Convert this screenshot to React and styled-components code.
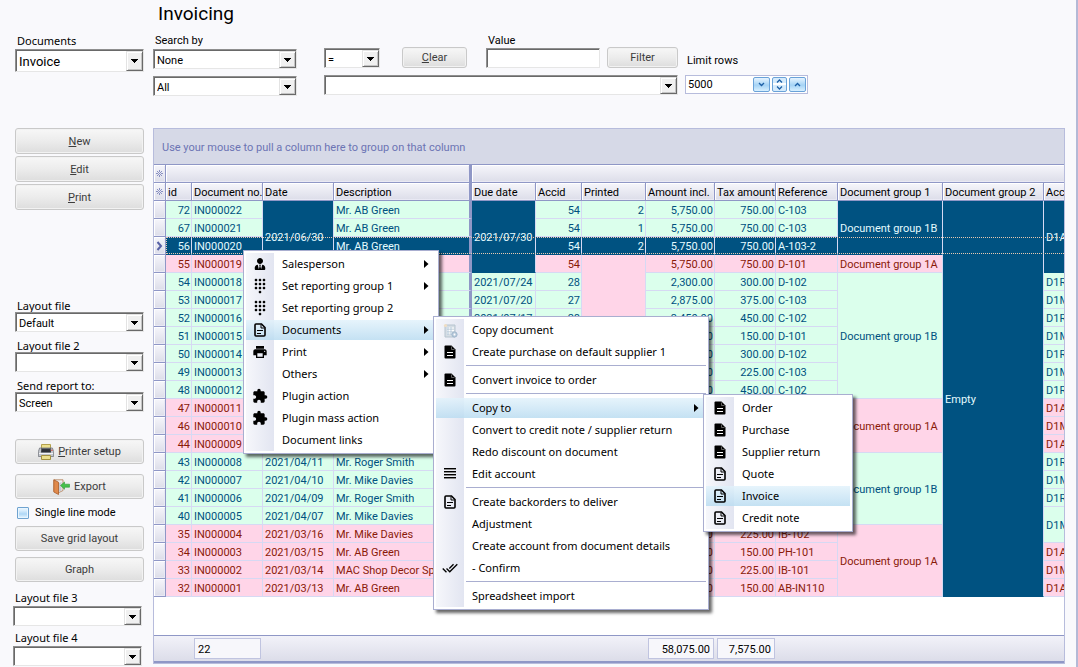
import React from "react";
import styled, { createGlobalStyle, css } from "styled-components";
import { MdDialpad, MdPrint, MdDoneAll, MdExtension } from "react-icons/md";
import { FaUserTie } from "react-icons/fa";

const GlobalStyle = createGlobalStyle`
  *, *::before, *::after { box-sizing: border-box; }
  body {
    margin: 0;
    background: #f9f9fc;
    color: #000;
    font-family: Roboto, "Liberation Sans", sans-serif;
    font-size: 11px;
  }
  button, input, select { font: inherit; color: inherit; margin: 0; }
`;

/* ---------- page frame ---------- */

const Page = styled.div`
  position: relative;
  display: flex;
  min-height: 100vh;
  overflow: hidden;
  border-right: 2px solid #b4b9d6;
`;

const Sidebar = styled.aside`
  flex: none;
  width: 153px;
  padding-top: 35px;
`;

const Section = styled.section`
  display: flex;
  flex-direction: column;
  width: 129px;
  gap: ${(p) => p.$gap || 0}px;
  margin-top: ${(p) => p.$top || 0}px;
  margin-left: ${(p) => p.$inset || 15}px;
`;

const Main = styled.main`
  flex: 1;
  min-width: 0;
  display: flex;
  flex-direction: column;
  padding: 4px 11px 3px 0;
`;

const Title = styled.h1`
  margin: 0 0 10px;
  padding-left: 5px;
  font-size: 19px;
  line-height: 20px;
  font-weight: 400;
`;

/* ---------- form controls ---------- */

const Field = styled.div`
  display: flex;
  flex-direction: column;
  gap: ${(p) => p.$gap || 0}px;
  width: ${(p) => (p.$width ? p.$width + "px" : "auto")};
`;

const Label = styled.label`
  height: 12px;
  padding-left: 2px;
  line-height: 14px;
  white-space: nowrap;
  ${(p) =>
    p.$ui &&
    css`
      line-height: 12px;
      font-family: "Noto Sans", "Open Sans", sans-serif;
    `}
`;

const sunken = css`
  border: 1px solid;
  border-color: #8f8f8f #e6e6e6 #e6e6e6 #8f8f8f;
  box-shadow: inset 1px 1px 0 #696969;
  border-radius: 0;
  background: #fff;
`;

const SelectFrame = styled.div`
  position: relative;
  display: flex;
  height: ${(p) => p.$height || 20}px;
  width: ${(p) => (p.$width ? p.$width + "px" : "auto")};
  font-size: ${(p) => p.$size || 11}px;
`;

const NativeSelect = styled.select`
  ${sunken}
  appearance: none;
  width: 100%;
  padding: 2px 20px 0 3px;
  outline: none;
`;

const SelectArrow = styled.span`
  position: absolute;
  top: 2px;
  right: 1px;
  bottom: 1px;
  width: 17px;
  display: flex;
  align-items: center;
  justify-content: center;
  pointer-events: none;
  background: #f0f0f0;
  border: 1px solid;
  border-color: #e3e3e3 #696969 #696969 #e3e3e3;
  box-shadow: inset 1px 1px 0 #fff, inset -1px -1px 0 #c4c4c4;
`;

function Select({ id, value, height, width, size, label }) {
  return (
    <SelectFrame $height={height} $width={width} $size={size}>
      <NativeSelect id={id} aria-label={label} defaultValue={value}>
        <option value={value}>{value}</option>
      </NativeSelect>
      <SelectArrow>
        <svg width="7" height="4" viewBox="0 0 7 4" shapeRendering="crispEdges">
          <path d="M0 0h7v1H6v1H5v1H4v1H3V3H2V2H1V1H0z" fill="#000" />
        </svg>
      </SelectArrow>
    </SelectFrame>
  );
}

const TextInput = styled.input`
  ${sunken}
  width: 100%;
  height: 20px;
  padding: 0 3px;
  outline: none;
`;

const Button = styled.button`
  display: flex;
  align-items: center;
  justify-content: center;
  gap: 4px;
  width: ${(p) => (p.$width ? p.$width + "px" : "auto")};
  height: ${(p) => p.$height || 25}px;
  padding: 0;
  border: 1px solid #c9c9c9;
  border-radius: 3px;
  background: linear-gradient(#f7f7f7, #ececec 50%, #dddddd);
  box-shadow: inset 0 0 0 1px #f2f2f2;
  color: #3c3c3c;
  white-space: nowrap;

  u { text-underline-offset: 1px; }
`;

const CheckRow = styled.label`
  display: flex;
  align-items: center;
  gap: 6px;
  height: 27px;
  padding-left: 2px;

  input {
    appearance: none;
    width: 12px;
    height: 12px;
    border: 1px solid #6fa3d0;
    border-radius: 1px;
    background: linear-gradient(#dff0fd 20%, #aed7f6 60%, #e8f6ff);
    box-shadow: inset 0 0 0 1px #e8f5ff;
  }
`;

/* ---------- search toolbar ---------- */

const Toolbar = styled.div`
  display: flex;
  align-items: flex-start;
  margin-bottom: 32px;
`;

const SearchColumn = styled.div`
  display: flex;
  flex-direction: column;
  gap: 7px;
  width: 144px;
  margin-right: 27px;
`;

const FilterColumn = styled.div`
  display: flex;
  flex-direction: column;
  gap: 7px;
  width: 354px;
  margin-right: 7px;
`;

const FilterLine = styled.div`
  display: flex;
  align-items: flex-end;
  justify-content: space-between;
`;

const FilterActions = styled.div`
  display: flex;
  align-items: flex-end;
  gap: ${(p) => p.$gap}px;
`;

const LimitColumn = styled.div`
  display: flex;
  flex-direction: column;
  gap: 9px;
  padding-top: 20px;
`;

const Spinner = styled.div`
  display: flex;
  align-items: center;
  gap: 2px;
  width: 123px;
  height: 19px;
  padding-right: 1px;
  border: 1px solid #b7bcdc;
  background: #fff;

  input {
    flex: 1;
    min-width: 0;
    height: 17px;
    padding: 0 2px;
    border: 0;
    background: none;
    outline: none;
  }
`;

const SpinButton = styled.button`
  display: flex;
  align-items: center;
  justify-content: center;
  width: ${(p) => (p.$split ? 15 : 17)}px;
  height: 15px;
  padding: 0;
  border: 1px solid #6aa2d8;
  border-radius: 2px;
  background: ${(p) =>
    p.$split
      ? "linear-gradient(#d5ebfc 40%, #fff 42%, #fff 54%, #d5ebfc 58%)"
      : "linear-gradient(#e6f4ff, #a5d3f5 55%, #d8f0ff)"};
`;

/* ---------- data grid ---------- */

const LINE = "#8f97c6";

const GridPanel = styled.section`
  flex: 1;
  display: flex;
  flex-direction: column;
  overflow: hidden;
  border: 1px solid #b7bcdc;
  background: #fff;
`;

const GroupBar = styled.div`
  flex: none;
  height: 36px;
  padding-left: 8px;
  line-height: 37px;
  border-bottom: 1px solid ${LINE};
  background: #d6d9e7;
  color: #6c74b4;
`;

const TableArea = styled.div`
  flex: 1;
  overflow: hidden;
`;

const Table = styled.table`
  width: 1040px;
  table-layout: fixed;
  border-collapse: separate;
  border-spacing: 0;
`;

const headFace = css`
  border-right: 1px solid ${LINE};
  border-bottom: 1px solid ${LINE};
  background: linear-gradient(#f6f6fb, #dcdde9);
  box-shadow: inset 1px 1px 0 #fff, inset -1px -1px 0 #e9e9f4;
`;

const HeadCell = styled.th`
  ${headFace}
  height: 18px;
  padding: 2px 2px 0;
  font-weight: 400;
  line-height: 15px;
  text-align: left;
  white-space: nowrap;
  overflow: hidden;
  ${(p) => p.$thick && css`border-right-width: 3px;`}
`;

const Marker = styled.td`
  ${headFace}
  height: 18px;
  padding: 0;
  line-height: 0;
  text-align: center;
  vertical-align: middle;
`;

const tones = {
  green: css`background: #dbffec; color: #00517f;`,
  pink: css`background: #ffd5e8; color: #8a1a08;`,
  dark: css`background: #005281; color: #e4fbff;`,
};

const Cell = styled.td`
  height: 18px;
  padding: 2px 1px 0 2px;
  line-height: 15px;
  white-space: nowrap;
  overflow: hidden;
  text-align: ${(p) => (p.$right ? "right" : "left")};
  border-right: 1px solid #d6d9f3;
  border-bottom: 1px solid #d6d9f3;
  ${(p) => p.$thick && css`border-right: 3px solid ${LINE};`}
  ${(p) => tones[p.$tone]}
  ${(p) => p.$tone === "dark" && css`border-bottom-color: #005281;`}
`;

const DataRow = styled.tr`
  position: relative;
`;

const FocusLine = styled.span`
  position: absolute;
  z-index: 1;
  inset: 0 0 1px 12px;
  border: 1px dotted #e8c9b0;
  pointer-events: none;
`;

const Footer = styled.footer`
  flex: none;
  display: flex;
  align-items: center;
  height: 28px;
  padding-left: 40px;
  border-top: 1px solid ${LINE};
  border-bottom: 2px solid ${LINE};
  background: linear-gradient(#f2f2f9, #dcdde9);
`;

const Total = styled.output`
  width: ${(p) => p.$width}px;
  height: 21px;
  margin-left: ${(p) => p.$left || 0}px;
  padding: 0 3px;
  line-height: 21px;
  text-align: ${(p) => (p.$left ? "right" : "left")};
  border: 1px solid #c0c4e0;
  background: #f7f7fb;
`;

/* ---------- context menus ---------- */

const MenuBox = styled.div`
  position: absolute;
  z-index: ${(p) => p.$level};
  left: ${(p) => p.$x}px;
  top: ${(p) => p.$y}px;
  min-width: ${(p) => p.$width}px;
  padding: 2px;
  border: 1px solid #a9aed0;
  background: #fff;
  box-shadow: 3px 3px 3px rgba(0, 0, 0, 0.6);
  font-family: "Noto Sans", "Open Sans", sans-serif;
`;

const MenuItems = styled.div`
  background: linear-gradient(90deg, #f6f7fb, #e2e5f1) 0 0 / 28px 100% no-repeat;
`;

const MenuButton = styled.button`
  display: flex;
  align-items: center;
  width: 100%;
  height: 22px;
  padding: 0 7px 0 0;
  border: solid transparent;
  border-width: 1px 0;
  background: ${(p) =>
    p.$active ? "linear-gradient(rgba(226,242,251,0.85), rgba(186,220,241,0.85)) padding-box" : "none"};
  text-align: left;
  white-space: nowrap;
`;

const MenuIcon = styled.span`
  display: flex;
  align-items: center;
  justify-content: center;
  flex: none;
  width: 28px;
  margin-right: 8px;
`;

const MenuText = styled.span`
  flex: 1;
  padding-bottom: 2px;
`;

const MenuRule = styled.hr`
  height: 6px;
  margin: 0 0 0 30px;
  border: 0;
  background: linear-gradient(#a9aed0, #a9aed0) 0 2px / 100% 1px no-repeat;
`;

/* ---------- drawings ---------- */

const DocSolid = () => (
  <svg width="12" height="14" viewBox="0 0 12 14">
    <path d="M1.5 0.5H7.5L11.5 4.5V12.5Q11.5 13.5 10.5 13.5H1.5Q0.5 13.5 0.5 12.5V1.5Q0.5 0.5 1.5 0.5Z" fill="#000" />
    <path d="M7.5 1.5V4.5H10.5" stroke="#777" fill="none" strokeWidth="0.8" />
    <path d="M3 7.5H9M3 10.5H9" stroke="#fff" />
  </svg>
);

const DocOutline = () => (
  <svg width="12" height="14" viewBox="0 0 12 14">
    <path d="M2 1H7.5L11 4.5V12Q11 13 10 13H2Q1 13 1 12V2Q1 1 2 1Z" fill="none" stroke="#000" strokeWidth="1.6" />
    <path d="M7 1.5V5H10.5" stroke="#000" fill="none" />
    <path d="M3 7.5H9M3 10.5H7" stroke="#000" strokeWidth="1.2" />
  </svg>
);

const LinesIcon = () => (
  <svg width="12" height="12" viewBox="0 0 12 12" shapeRendering="crispEdges">
    <path d="M0 0.5H12M0 3.5H12M0 6.5H12M0 9.5H12" stroke="#000" />
    <path d="M0 1.5H12M0 4.5H12M0 7.5H12M0 10.5H12" stroke="#888" />
  </svg>
);

const CopyDocIcon = () => (
  <svg width="15" height="15" viewBox="0 0 15 15">
    <path d="M2 2H12V14H2Z" fill="#d5dde4" stroke="#b6c4cf" />
    <path d="M4 5H11M4 7.5H11M4 10H9" stroke="#fff" />
    <path d="M5 4V12M8 4V12" stroke="#a9c3d8" strokeWidth="0.8" />
    <circle cx="2.5" cy="2.5" r="1.6" fill="#f1dfc4" />
    <circle cx="11.5" cy="11.5" r="2.6" fill="#bccddd" stroke="#9db5cb" />
    <circle cx="11.5" cy="11.5" r="0.9" fill="#fff" />
  </svg>
);

const PrinterIcon = () => (
  <svg width="16" height="16" viewBox="0 0 16 16">
    <path d="M3.5 0.5H12.5V5H3.5Z" fill="#ece08e" stroke="#b3a04c" />
    <path d="M1.6 4H14.4L15.6 7.5V12.5H0.4V7.5Z" fill="#c3c6cc" stroke="#73777f" strokeWidth="0.8" />
    <path d="M3.5 4H12.5L13 8.5H3Z" fill="#2f3238" />
    <path d="M4 4.6H12" stroke="#6c7078" />
    <path d="M1 9.5H15" stroke="#f3f4f6" />
    <path d="M3.5 11.5H12.5V15.5H3.5Z" fill="#ece08e" stroke="#a3903e" />
    <circle cx="13.9" cy="6.2" r="0.8" fill="#d8483c" />
  </svg>
);

const ExportIcon = () => (
  <svg width="17" height="16" viewBox="0 0 17 16">
    <path d="M1 0.8H10V11.5L6 13.5L1 12Z" fill="#ededf0" stroke="#b07a50" strokeWidth="0.8" />
    <path d="M0.8 0.8L5.5 3.2V15.5L0.8 13Z" fill="#e08a4c" stroke="#a85c28" strokeWidth="0.8" />
    <path d="M6 4L8.5 3V11.5L6 13Z" fill="#c9cad0" />
    <path d="M7.5 6.5L11.5 3V5.2H16.5V8.2H11.5V10.2Z" fill="#45c14a" stroke="#2b9a38" strokeWidth="0.6" />
  </svg>
);

const StarIcon = () => (
  <svg width="9" height="9" viewBox="0 0 9 9" shapeRendering="crispEdges">
    <path
      d="M4 1h1v2h-1zM4 6h1v2h-1zM1 4h2v1h-2zM6 4h2v1h-2zM4 4h1v1h-1zM2 2h1v1h-1zM6 2h1v1h-1zM2 6h1v1h-1zM6 6h1v1h-1zM3 3h1v1h-1zM5 3h1v1h-1zM3 5h1v1h-1zM5 5h1v1h-1z"
      fill="#8990c2"
    />
  </svg>
);

const RowPointer = () => (
  <svg width="7" height="10" viewBox="0 0 7 10">
    <path d="M1.5 1L5 5L1.5 9" fill="none" stroke="#5862a6" strokeWidth="2" />
  </svg>
);

const SubmenuArrow = () => (
  <svg width="5" height="8" viewBox="0 0 5 8">
    <path d="M0 0L4.5 4L0 8Z" fill="#000" />
  </svg>
);

const Chevron = ({ d, h = 5 }) => (
  <svg width="7" height={h} viewBox={`0 0 7 ${h}`}>
    <path d={d} fill="none" stroke="#1c5fa5" strokeWidth="1.3" />
  </svg>
);

/* ---------- data ---------- */

const COLUMNS = [
  { key: "id", title: "id", width: 26, right: true },
  { key: "doc", title: "Document no.", width: 71 },
  { key: "date", title: "Date", width: 71 },
  { key: "desc", title: "Description", width: 138, thick: true },
  { key: "due", title: "Due date", width: 64 },
  { key: "accid", title: "Accid", width: 46, right: true },
  { key: "printed", title: "Printed", width: 64, right: true },
  { key: "amount", title: "Amount incl.", width: 69, right: true },
  { key: "tax", title: "Tax amount", width: 61, right: true },
  { key: "ref", title: "Reference", width: 62 },
  { key: "group1", title: "Document group 1", width: 105 },
  { key: "group2", title: "Document group 2", width: 101 },
  { key: "account", title: "Acc", width: 150 },
];

const row = (id, doc, date, desc, due, accid, printed, amount, tax, ref, account, tone = "green") => ({
  id, doc, date, desc, due, accid, printed, amount, tax, ref, account, tone,
});

const ROWS = [
  row(72, "IN000022", "", "Mr. AB Green", "", 54, 2, "5,750.00", "750.00", "C-103", ""),
  row(67, "IN000021", "", "Mr. AB Green", "", 54, 1, "5,750.00", "750.00", "C-103", ""),
  row(56, "IN000020", "", "Mr. AB Green", "", 54, 2, "5,750.00", "750.00", "A-103-2", "", "dark"),
  row(55, "IN000019", "", "", "", 54, "", "5,750.00", "750.00", "D-101", "", "pink"),
  row(54, "IN000018", "", "", "2021/07/24", 28, "", "2,300.00", "300.00", "D-102", "D1R"),
  row(53, "IN000017", "", "", "2021/07/20", 27, "", "2,875.00", "375.00", "C-103", "D1M"),
  row(52, "IN000016", "", "", "2021/07/17", 28, "", "3,450.00", "450.00", "C-102", "D1R"),
  row(51, "IN000015", "", "", "", "", "", "1,150.00", "150.00", "D-101", "D1M"),
  row(50, "IN000014", "", "", "", "", "", "2,300.00", "300.00", "D-102", "D1R"),
  row(49, "IN000013", "", "", "", "", "", "1,725.00", "225.00", "C-103", "D1M"),
  row(48, "IN000012", "", "", "", "", "", "3,450.00", "450.00", "C-102", "D1R"),
  row(47, "IN000011", "", "", "", "", "", "", "", "", "D1A", "pink"),
  row(46, "IN000010", "", "", "", "", "", "", "", "", "D1M", "pink"),
  row(44, "IN000009", "", "", "", "", "", "", "", "", "D1A", "pink"),
  row(43, "IN000008", "2021/04/11", "Mr. Roger Smith", "", "", "", "", "", "", "D1R"),
  row(42, "IN000007", "2021/04/10", "Mr. Mike Davies", "", "", "", "", "", "", "D1M"),
  row(41, "IN000006", "2021/04/09", "Mr. Roger Smith", "", "", "", "", "", "", "D1R"),
  row(40, "IN000005", "2021/04/07", "Mr. Mike Davies", "", "", "", "", "", "", ""),
  row(35, "IN000004", "2021/03/16", "Mr. Mike Davies", "", "", "", "1,725.00", "225.00", "IB-102", "", "pink"),
  row(34, "IN000003", "2021/03/15", "Mr. AB Green", "", "", "", "1,150.00", "150.00", "PH-101", "D1A", "pink"),
  row(33, "IN000002", "2021/03/14", "MAC Shop Decor Sp", "", "", "", "1,725.00", "225.00", "IB-101", "D1M", "pink"),
  row(32, "IN000001", "2021/03/13", "Mr. AB Green", "", "", "", "1,150.00", "150.00", "AB-IN110", "D1A", "pink"),
];

// Vertically merged cells: column -> list of [first row, row count, tone, text]
const MERGES = {
  date: [[0, 4, "dark", "2021/06/30"]],
  due: [[0, 4, "dark", "2021/07/30"]],
  printed: [[3, 19, "pink", ""]],
  group1: [
    [0, 3, "dark", "Document group 1B"],
    [3, 1, "pink", "Document group 1A"],
    [4, 7, "green", "Document group 1B"],
    [11, 3, "pink", "Document group 1A"],
    [14, 4, "green", "Document group 1B"],
    [18, 4, "pink", "Document group 1A"],
  ],
  group2: [[0, 22, "dark", "Empty"]],
  account: [[0, 4, "dark", "D1A"], [17, 2, "green", "D1M"]],
};

function GridCell({ column, data, index }) {
  const merge = (MERGES[column.key] || []).find(([start, count]) => index >= start && index < start + count);
  if (merge && merge[0] !== index) return null;
  return (
    <Cell
      rowSpan={merge ? merge[1] : 1}
      $tone={merge ? merge[2] : data.tone}
      $right={column.right}
      $thick={column.thick}
    >
      {merge ? merge[3] : data[column.key]}
    </Cell>
  );
}

function InvoiceTable() {
  return (
    <Table>
      <colgroup>
        <col style={{ width: 12 }} />
        {COLUMNS.map((c) => (
          <col key={c.key} style={{ width: c.width }} />
        ))}
      </colgroup>
      <thead>
        <tr>
          <Marker><StarIcon /></Marker>
          <HeadCell colSpan={4} $thick />
          <HeadCell colSpan={9} />
        </tr>
        <tr>
          <Marker><StarIcon /></Marker>
          {COLUMNS.map((c) => (
            <HeadCell key={c.key} scope="col" $thick={c.thick}>{c.title}</HeadCell>
          ))}
        </tr>
      </thead>
      <tbody>
        {ROWS.map((data, index) => (
          <DataRow key={data.id}>
            <Marker>
              {data.tone === "dark" && <RowPointer />}
              {data.tone === "dark" && <FocusLine />}
            </Marker>
            {COLUMNS.map((c) => (
              <GridCell key={c.key} column={c} data={data} index={index} />
            ))}
          </DataRow>
        ))}
      </tbody>
    </Table>
  );
}

const RULE = "rule";

const MAIN_MENU = [
  { text: "Salesperson", icon: <FaUserTie size={12} />, sub: true },
  { text: "Set reporting group 1", icon: <MdDialpad size={16} />, sub: true },
  { text: "Set reporting group 2", icon: <MdDialpad size={16} /> },
  { text: "Documents", icon: <DocOutline />, sub: true, active: true },
  { text: "Print", icon: <MdPrint size={16} />, sub: true },
  { text: "Others", sub: true },
  { text: "Plugin action", icon: <MdExtension size={16} /> },
  { text: "Plugin mass action", icon: <MdExtension size={16} /> },
  { text: "Document links" },
];

const DOCUMENTS_MENU = [
  { text: "Copy document", icon: <CopyDocIcon /> },
  { text: "Create purchase on default supplier 1", icon: <DocSolid /> },
  RULE,
  { text: "Convert invoice to order", icon: <DocSolid /> },
  RULE,
  { text: "Copy to", sub: true, active: true },
  { text: "Convert to credit note / supplier return" },
  { text: "Redo discount on document" },
  { text: "Edit account", icon: <LinesIcon /> },
  RULE,
  { text: "Create backorders to deliver", icon: <DocOutline /> },
  { text: "Adjustment" },
  { text: "Create account from document details" },
  { text: "- Confirm", icon: <MdDoneAll size={16} /> },
  RULE,
  { text: "Spreadsheet import" },
];

const COPY_MENU = [
  { text: "Order", icon: <DocSolid /> },
  { text: "Purchase", icon: <DocSolid /> },
  { text: "Supplier return", icon: <DocSolid /> },
  { text: "Quote", icon: <DocOutline /> },
  { text: "Invoice", icon: <DocOutline />, active: true },
  { text: "Credit note", icon: <DocOutline /> },
];

function Menu({ items, x, y, width, level }) {
  return (
    <MenuBox role="menu" $x={x} $y={y} $width={width} $level={level}>
      <MenuItems>
        {items.map((item, i) =>
          item === RULE ? (
            <MenuRule key={i} />
          ) : (
            <MenuButton key={i} type="button" role="menuitem" $active={item.active}>
              <MenuIcon>{item.icon}</MenuIcon>
              <MenuText>{item.text}</MenuText>
              {item.sub && <SubmenuArrow />}
            </MenuButton>
          )
        )}
      </MenuItems>
    </MenuBox>
  );
}

function LabelledSelect({ id, text, value = "", gap, height, size, ui = true }) {
  return (
    <Field $gap={gap}>
      <Label htmlFor={id} $ui={ui}>{text}</Label>
      <Select id={id} value={value} height={height} size={size} />
    </Field>
  );
}

export default function App() {
  return (
    <Page>
      <GlobalStyle />
      <Sidebar>
        <Section>
          <LabelledSelect id="documents" text="Documents" value="Invoice" gap={2} height={23} size={13} />
        </Section>
        <Section $top={56} $gap={2}>
          <Button type="button" $height={26}><span><u>N</u>ew</span></Button>
          <Button type="button" $height={26}><span><u>E</u>dit</span></Button>
          <Button type="button" $height={26}><span><u>P</u>rint</span></Button>
        </Section>
        <Section $top={90} $gap={8}>
          <LabelledSelect id="layout1" text="Layout file" value="Default" />
          <LabelledSelect id="layout2" text="Layout file 2" />
          <LabelledSelect id="report" text="Send report to:" value="Screen" />
        </Section>
        <Section $top={27} $gap={10}>
          <Button type="button"><PrinterIcon /><span><u>P</u>rinter setup</span></Button>
          <Button type="button"><ExportIcon />Export</Button>
        </Section>
        <Section>
          <CheckRow><input type="checkbox" />Single line mode</CheckRow>
        </Section>
        <Section $gap={6}>
          <Button type="button">Save grid layout</Button>
          <Button type="button">Graph</Button>
        </Section>
        <Section $top={10} $gap={6} $inset={13}>
          <LabelledSelect id="layout3" text="Layout file 3" gap={2} />
          <LabelledSelect id="layout4" text="Layout file 4" gap={2} />
        </Section>
      </Sidebar>

      <Main>
        <Title>Invoicing</Title>
        <Toolbar>
          <SearchColumn>
            <LabelledSelect id="searchby" text="Search by" value="None" gap={3} ui={false} />
            <Select label="Search scope" value="All" />
          </SearchColumn>
          <FilterColumn>
            <FilterLine>
              <FilterActions $gap={22}>
                <Select label="Comparison" value="=" width={56} />
                <Button type="button" $width={65} $height={21}><span><u>C</u>lear</span></Button>
              </FilterActions>
              <FilterActions $gap={7}>
                <Field $gap={2} $width={114}>
                  <Label htmlFor="value">Value</Label>
                  <TextInput id="value" type="text" />
                </Field>
                <Button type="button" $width={71} $height={21}>Filter</Button>
              </FilterActions>
            </FilterLine>
            <Select label="Saved filter" value="" />
          </FilterColumn>
          <LimitColumn>
            <Label htmlFor="limit">Limit rows</Label>
            <Spinner>
              <input id="limit" type="text" defaultValue="5000" />
              <SpinButton type="button" aria-label="Decrease"><Chevron d="M1 1L3.5 3.5L6 1" /></SpinButton>
              <SpinButton type="button" aria-label="Adjust" $split>
                <Chevron h={11} d="M1 3.5L3.5 1L6 3.5M1 7.5L3.5 10L6 7.5" />
              </SpinButton>
              <SpinButton type="button" aria-label="Increase"><Chevron d="M1 4L3.5 1.5L6 4" /></SpinButton>
            </Spinner>
          </LimitColumn>
        </Toolbar>

        <GridPanel>
          <GroupBar>Use your mouse to pull a column here to group on that column</GroupBar>
          <TableArea>
            <InvoiceTable />
          </TableArea>
          <Footer>
            <Total $width={67}>22</Total>
            <Total $width={66} $left={387}>58,075.00</Total>
            <Total $width={58} $left={3}>7,575.00</Total>
          </Footer>
        </GridPanel>
      </Main>

      <Menu items={MAIN_MENU} x={243} y={250} width={196} level={2} />
      <Menu items={DOCUMENTS_MENU} x={433} y={316} width={276} level={3} />
      <Menu items={COPY_MENU} x={703} y={394} width={150} level={4} />
    </Page>
  );
}
